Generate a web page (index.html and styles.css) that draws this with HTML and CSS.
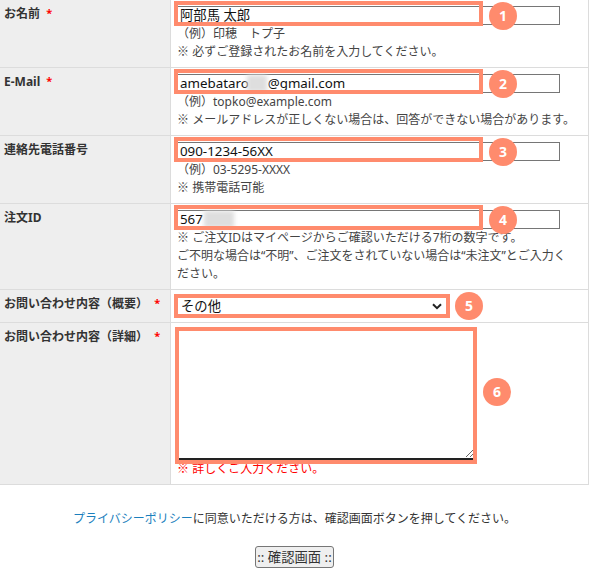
FILE: index.html
```html
<!DOCTYPE html>
<html lang="ja">
<head>
<meta charset="utf-8">
<title>お問い合わせ</title>
<link rel="stylesheet" href="styles.css">
</head>
<body>
<div class="form">
  <div class="row">
    <div class="label">お名前 <span class="req">*</span></div>
    <div class="field">
      <div class="ctrl">
        <div class="input">阿部馬 太郎</div>
        <span class="mark mark-input"></span>
        <span class="num num-input">1</span>
      </div>
      <p class="hint">（例）印穂　トプ子</p>
      <p class="hint"><span class="ref">※</span> 必ずご登録されたお名前を入力してください。</p>
    </div>
  </div>
  <div class="row">
    <div class="label">E-Mail <span class="req">*</span></div>
    <div class="field">
      <div class="ctrl">
        <div class="input">amebataro<span class="blur blur-mail"></span>@gmail.com</div>
        <span class="mark mark-input"></span>
        <span class="num num-input">2</span>
      </div>
      <p class="hint">（例）topko@example.com</p>
      <p class="hint"><span class="ref">※</span> メールアドレスが正しくない場合は、回答ができない場合があります。</p>
    </div>
  </div>
  <div class="row">
    <div class="label">連絡先電話番号</div>
    <div class="field">
      <div class="ctrl">
        <div class="input">090-1234-56XX</div>
        <span class="mark mark-input"></span>
        <span class="num num-input">3</span>
      </div>
      <p class="hint">（例）03-5295-XXXX</p>
      <p class="hint"><span class="ref">※</span> 携帯電話可能</p>
    </div>
  </div>
  <div class="row">
    <div class="label">注文ID</div>
    <div class="field">
      <div class="ctrl">
        <div class="input">567<span class="blur blur-id"></span></div>
        <span class="mark mark-input"></span>
        <span class="num num-input">4</span>
      </div>
      <p class="hint"><span class="ref">※</span> ご注文IDはマイページからご確認いただける7桁の数字です。<br>ご不明な場合は“不明”、ご注文をされていない場合は“未注文”とご入力ください。</p>
    </div>
  </div>
  <div class="row">
    <div class="label">お問い合わせ内容（概要） <span class="req">*</span></div>
    <div class="field">
      <div class="ctrl ctrl-select">
        <div class="select"><span>その他</span>
          <svg class="chev" width="10" height="7" viewBox="0 0 10 7"><path d="M1 1.2 L5 5.2 L9 1.2" fill="none" stroke="#222" stroke-width="2"/></svg>
        </div>
        <span class="mark mark-select"></span>
        <span class="num num-select">5</span>
      </div>
    </div>
  </div>
  <div class="row">
    <div class="label">お問い合わせ内容（詳細） <span class="req">*</span></div>
    <div class="field">
      <div class="ctrl ctrl-area">
        <textarea class="area"></textarea>
        <span class="mark mark-area"></span>
        <span class="num num-area">6</span>
      </div>
      <p class="hint hint-red"><span class="ref">※</span> 詳しくご入力ください。</p>
    </div>
  </div>
</div>
<div class="footer">
  <p class="agree"><a class="link" href="#">プライバシーポリシー</a>に同意いただける方は、確認画面ボタンを押してください。</p>
  <button class="btn" type="button">:: 確認画面 ::</button>
</div>
</body>
</html>
```
FILE: styles.css
```css
body {
  margin: 0;
  background: #fff;
  color: #333;
  font-family: "Noto Sans", "Noto Sans CJK JP", sans-serif;
}

.form {
  width: 589px;
}

.row {
  display: grid;
  grid-template-columns: 171px 1fr;
  border-bottom: 1px solid #dcdcdc;
  border-right: 1px solid #dcdcdc;
}

.label {
  box-sizing: border-box;
  background: #eeeeee;
  border-right: 1px solid #dcdcdc;
  padding: 6px 4px;
  font-size: 12px;
  line-height: 16px;
  font-weight: bold;
  color: #333;
}

.req {
  color: #f00;
  font-size: 11px;
  position: relative;
  top: -1px;
  margin-left: 3px;
}

.field {
  padding: 6px 12px 6px 6px;
  min-width: 0;
}

.ctrl {
  position: relative;
  width: 383px;
}

.input {
  box-sizing: border-box;
  width: 383px;
  height: 19px;
  border: 1px solid #767676;
  padding: 0 2px;
  font-size: 13.33px;
  line-height: 17px;
  color: #111;
  white-space: nowrap;
  background: #fff;
}

.blur {
  display: inline-block;
  vertical-align: top;
  height: 17px;
  background: #dedede;
  filter: blur(2px);
}

.blur-mail {
  width: 20px;
  margin: 0 1px 0 -2px;
}

.blur-id {
  width: 30px;
  margin-left: 1px;
}

.hint {
  margin: 0;
  font-size: 12px;
  line-height: 18px;
  color: #444;
}

.ref {
  font-family: "Noto Sans CJK JP", sans-serif;
  line-height: 0;
}

.hint-red {
  color: #f00;
}

.mark {
  position: absolute;
  box-sizing: border-box;
  border: 4px solid #ff8b6d;
  pointer-events: none;
}

.mark-input {
  left: -3px;
  top: -5px;
  width: 309px;
  height: 25px;
}

.num {
  position: absolute;
  width: 28px;
  height: 28px;
  border-radius: 50%;
  background: #ff8b6d;
  color: #fff;
  font-size: 14px;
  font-weight: bold;
  line-height: 28px;
  text-align: center;
}

.num-input {
  left: 312px;
  top: -4px;
}

.ctrl-select {
  width: 271px;
}

.select {
  box-sizing: border-box;
  width: 271px;
  height: 20px;
  border: 1px solid #767676;
  display: flex;
  align-items: center;
  justify-content: space-between;
  padding: 0 5px 0 3px;
  font-size: 13.33px;
  line-height: 18px;
  color: #111;
  background: #fff;
}

.mark-select {
  left: -3px;
  top: -2px;
  width: 276px;
  height: 24px;
}

.num-select {
  left: 278px;
  top: -4px;
}

.ctrl-area {
  width: 297px;
  margin-left: 1px;
}

.area {
  display: block;
  box-sizing: border-box;
  width: 297px;
  height: 131px;
  margin: 0;
  border: 1px solid #767676;
  border-bottom: 2px solid #222;
  background: #fff;
}

.mark-area {
  left: -3px;
  top: -2px;
  width: 302px;
  height: 137px;
}

.num-area {
  left: 305px;
  top: 49px;
}

.footer {
  width: 589px;
  text-align: center;
  padding-top: 25px;
}

.agree {
  margin: 0;
  font-size: 12px;
  line-height: 18px;
  color: #333;
}

.link {
  color: #1b7fbd;
  text-decoration: none;
}

.btn {
  margin-top: 18px;
  box-sizing: border-box;
  width: 79px;
  height: 22px;
  padding: 0;
  border: 1px solid #767676;
  border-radius: 3px;
  background: #efefef;
  color: #333;
  font-family: "Noto Sans", "Noto Sans CJK JP", sans-serif;
  font-size: 13.33px;
  line-height: 18px;
}
```
